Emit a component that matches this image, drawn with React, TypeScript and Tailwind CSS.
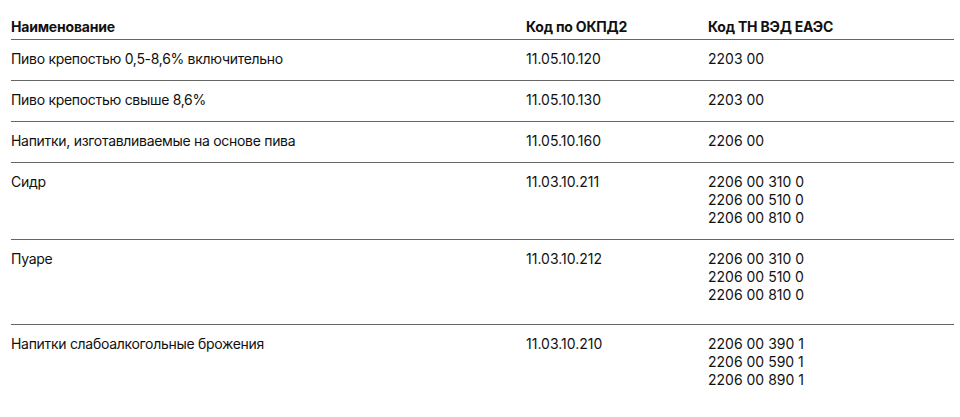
import React from "react";

type Row = { name: string; okpd: string; tnved: string[]; extra?: boolean };

const rows: Row[] = [
  { name: "Пиво крепостью 0,5-8,6% включительно", okpd: "11.05.10.120", tnved: ["2203 00"] },
  { name: "Пиво крепостью свыше 8,6%", okpd: "11.05.10.130", tnved: ["2203 00"] },
  { name: "Напитки, изготавливаемые на основе пива", okpd: "11.05.10.160", tnved: ["2206 00"] },
  { name: "Сидр", okpd: "11.03.10.211", tnved: ["2206 00 310 0", "2206 00 510 0", "2206 00 810 0"] },
  { name: "Пуаре", okpd: "11.03.10.212", tnved: ["2206 00 310 0", "2206 00 510 0", "2206 00 810 0"], extra: true },
  { name: "Напитки слабоалкогольные брожения", okpd: "11.03.10.210", tnved: ["2206 00 390 1", "2206 00 590 1", "2206 00 890 1"] },
];

export default function App() {
  return (
    <div
      className="w-[960px] h-[417px] overflow-hidden bg-white text-[#111] pl-[11px] pr-[6px]"
      style={{ fontFamily: "Inter, 'Liberation Sans', sans-serif" }}
    >
      <div className="grid grid-cols-[515px_182px_1fr] text-[14px] leading-[18px] font-bold pt-[18px] pb-[3px] tracking-[-0.2px]">
        <div>Наименование</div>
        <div>Код по ОКПД2</div>
        <div>Код ТН ВЭД ЕАЭС</div>
      </div>
      {rows.map((r, i) => (
        <div
          key={i}
          className={
            "grid grid-cols-[515px_182px_1fr] text-[14px] leading-[18px] border-t border-[#666] pt-[10px] " +
            (r.extra ? "pb-[20px]" : "pb-[12px]")
          }
        >
          <div className="tracking-[-0.3px]">{r.name}</div>
          <div>{r.okpd}</div>
          <div className="flex flex-col">
            {r.tnved.map((t, j) => (
              <div key={j}>{t}</div>
            ))}
          </div>
        </div>
      ))}
    </div>
  );
}
